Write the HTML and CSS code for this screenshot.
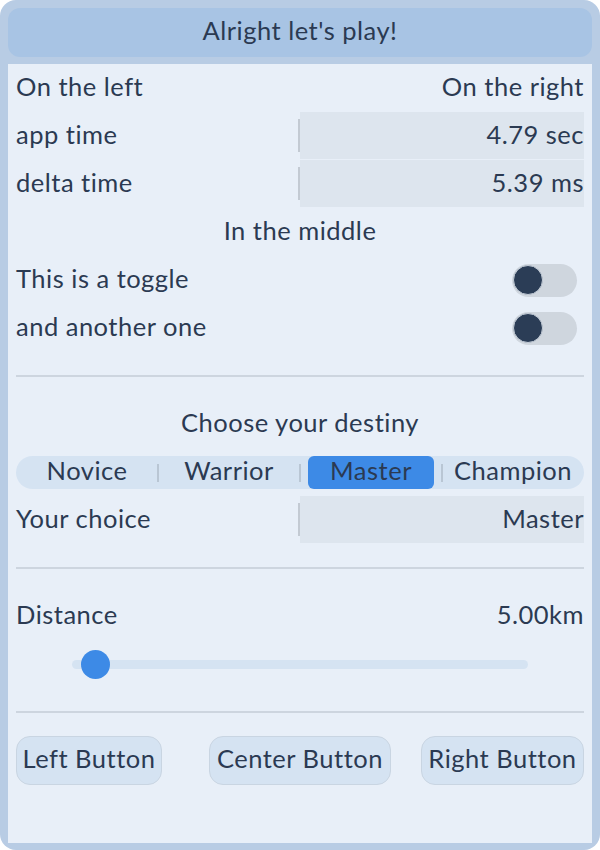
FILE: index.html
```html
<!DOCTYPE html>
<html>
<head>
<meta charset="utf-8">
<link rel="stylesheet" href="styles.css">
</head>
<body>
<div class="frame">
  <div class="header">Alright let's play!</div>
  <div class="window">
    <div class="row split"><span>On the left</span><span>On the right</span></div>
    <div class="row"><span class="label">app time</span><div class="value">4.79 sec</div></div>
    <div class="row"><span class="label">delta time</span><div class="value">5.39 ms</div></div>
    <div class="row center">In the middle</div>
    <div class="row"><span class="label">This is a toggle</span><div class="toggle"><div class="knob"></div></div></div>
    <div class="row"><span class="label">and another one</span><div class="toggle"><div class="knob"></div></div></div>
    <div class="sep"><div class="line"></div></div>
    <div class="row center">Choose your destiny</div>
    <div class="row">
      <div class="segmented">
        <div class="seg">Novice</div>
        <div class="seg">Warrior</div>
        <div class="seg selected"><span class="pill">Master</span></div>
        <div class="seg">Champion</div>
      </div>
    </div>
    <div class="row"><span class="label">Your choice</span><div class="value">Master</div></div>
    <div class="sep"><div class="line"></div></div>
    <div class="row split"><span>Distance</span><span>5.00km</span></div>
    <div class="row slider-row">
      <div class="track"><div class="thumb"></div></div>
    </div>
    <div class="sep"><div class="line"></div></div>
    <div class="buttons">
      <button class="btn btn-left">Left Button</button>
      <button class="btn btn-center">Center Button</button>
      <button class="btn btn-right">Right Button</button>
    </div>
  </div>
</div>
</body>
</html>
```
FILE: styles.css
```css
html, body {
  margin: 0;
  padding: 0;
  background: #ffffff;
}
body {
  font-family: Lato, "Noto Sans", sans-serif;
  font-weight: 400;
  color: #2b3a52;
  font-size: 25.5px;
  letter-spacing: 0.5px;
  line-height: 1;
}
.frame {
  width: 600px;
  height: 850px;
  box-sizing: border-box;
  background: #b8cce4;
  border-radius: 16px;
  padding: 8px 8px 7px 8px;
  display: flex;
  flex-direction: column;
  gap: 7px;
}
.header {
  height: 49px;
  flex: none;
  background: #a8c4e4;
  border-radius: 12px;
  display: flex;
  align-items: center;
  justify-content: center;
  padding-bottom: 4px;
  box-sizing: border-box;
}
.window {
  flex: 1;
  background: #e8eff8;
  padding: 0 8px;
  display: flex;
  flex-direction: column;
}
.row {
  height: 48px;
  flex: none;
  display: flex;
  align-items: center;
  justify-content: space-between;
}
.row > span, .row.center {
  padding-bottom: 2px;
}
.row.center {
  justify-content: center;
  box-sizing: border-box;
}
.value {
  width: 284px;
  height: 47px;
  align-self: flex-start;
  background: #dde5ee;
  display: flex;
  align-items: center;
  justify-content: flex-end;
  position: relative;
  padding-bottom: 2px;
  box-sizing: border-box;
}
.value::before {
  content: "";
  position: absolute;
  left: -2px;
  top: 7px;
  bottom: 7px;
  width: 2px;
  background: #c3cad3;
}
.toggle {
  width: 65px;
  height: 33px;
  margin-right: 7px;
  border-radius: 17px;
  background: #cfd6de;
  display: flex;
  align-items: center;
  padding-left: 1px;
  box-sizing: border-box;
}
.knob {
  width: 28px;
  height: 28px;
  border-radius: 50%;
  background: #2b3d56;
  border: 1px solid #c3ccd7;
}
.sep {
  height: 48px;
  flex: none;
  display: flex;
  align-items: center;
}
.line {
  flex: 1;
  height: 2px;
  background: #cdd5df;
}
.segmented {
  flex: 1;
  height: 33px;
  background: #d5e3f2;
  border-radius: 17px;
  display: grid;
  grid-template-columns: repeat(4, 1fr);
}
.seg {
  position: relative;
  display: flex;
  align-items: center;
  justify-content: center;
  padding-bottom: 2px;
  box-sizing: border-box;
}
.seg + .seg::before {
  content: "";
  position: absolute;
  left: -1px;
  top: 8px;
  bottom: 7px;
  width: 2px;
  background: #b9c6d4;
}
.seg.selected {
  padding: 0 8px;
}
.pill {
  flex: 1;
  align-self: stretch;
  background: #3d8ae6;
  border-radius: 6px;
  display: flex;
  align-items: center;
  justify-content: center;
  padding-bottom: 2px;
}
.slider-row {
  justify-content: flex-start;
}
.track {
  margin-left: 56px;
  width: 456px;
  height: 9px;
  border-radius: 5px;
  background: #d5e3f2;
  position: relative;
}
.thumb {
  position: absolute;
  left: 9px;
  top: -10px;
  width: 29px;
  height: 29px;
  border-radius: 50%;
  background: #3d8ae6;
}
.buttons {
  display: grid;
  grid-template-columns: 1fr 1fr 1fr;
  align-items: center;
}
.btn {
  font: inherit;
  letter-spacing: inherit;
  color: inherit;
  height: 49px;
  background: #d5e3f2;
  border: 1px solid #c9d5e2;
  border-radius: 14px;
  padding: 0 0 4px 0;
}
.btn-left { width: 146px; justify-self: start; }
.btn-center { width: 182px; justify-self: center; }
.btn-right { width: 163px; justify-self: end; }
```
